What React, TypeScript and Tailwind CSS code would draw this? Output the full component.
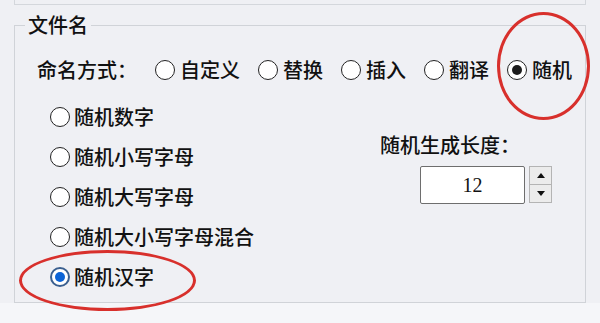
import React from "react";

const FONT = "font-['Noto_Sans_CJK_SC','Noto_Sans',sans-serif]";

const MODES = [
  { label: "自定义", checked: false },
  { label: "替换", checked: false },
  { label: "插入", checked: false },
  { label: "翻译", checked: false },
  { label: "随机", checked: true },
];

const KINDS = [
  { label: "随机数字", checked: false },
  { label: "随机小写字母", checked: false },
  { label: "随机大写字母", checked: false },
  { label: "随机大小写字母混合", checked: false },
  { label: "随机汉字", checked: true },
];

function Radio({ checked, blue }: { checked: boolean; blue?: boolean }) {
  if (checked && blue) {
    return (
      <span className="flex h-[20px] w-[20px] shrink-0 items-center justify-center rounded-full border-2 border-[#3a5f8f] bg-white">
        <span className="h-[10px] w-[10px] rounded-full bg-[#0b63d6]" />
      </span>
    );
  }
  return (
    <span className="flex h-[20px] w-[20px] shrink-0 items-center justify-center rounded-full border-[1.5px] border-[#222] bg-white">
      {checked && <span className="h-[10px] w-[10px] rounded-full bg-[#1c1c1c]" />}
    </span>
  );
}

export default function App() {
  return (
    <div className={`relative h-[323px] w-[600px] overflow-hidden bg-[#eff0f4] font-medium text-[#111] ${FONT}`}>
      <div className="mx-[14px] h-[5px] border-x border-b border-[#d4d7dc]" />

      <div className="relative mx-[14px] mt-[20px] h-[278px] border border-[#d0d3d8]">
        <span className="absolute left-[10px] top-[-14px] bg-[#eff0f4] px-[3px] text-[20px] leading-[26px]">
          文件名
        </span>

        <div className="flex items-center gap-[18px] pl-[22px] pt-[32px] text-[20px] leading-[24px]">
          <span>命名方式：</span>
          {MODES.map((m) => (
            <span key={m.label} className="flex items-center gap-[5px]">
              <Radio checked={m.checked} />
              <span>{m.label}</span>
            </span>
          ))}
        </div>

        <div className="mt-[15px] flex">
          <div className="flex w-[365px] flex-col pl-[35px]">
            {KINDS.map((k) => (
              <div key={k.label} className="flex h-[40px] items-center gap-[4px] text-[20px]">
                <Radio checked={k.checked} blue />
                <span>{k.label}</span>
              </div>
            ))}
          </div>

          <div className="flex flex-col pt-[36px]">
            <span className="text-[20px] leading-[24px]">随机生成长度：</span>
            <div className="ml-[40px] mt-[9px] flex gap-[4px]">
              <div className="flex h-[38px] w-[105px] items-center justify-center rounded-[2px] border border-[#6e6e6e] bg-white font-['Liberation_Serif',serif] text-[20px] font-normal">
                12
              </div>
              <div className="flex h-[37px] w-[23px] flex-col border border-[#b4b4b4] bg-[#ececec]">
                <div className="flex flex-1 items-center justify-center border-b border-[#b4b4b4]">
                  <span className="h-0 w-0 border-x-[4px] border-b-[5px] border-x-transparent border-b-[#111]" />
                </div>
                <div className="flex flex-1 items-center justify-center">
                  <span className="h-0 w-0 border-x-[4px] border-t-[5px] border-x-transparent border-t-[#111]" />
                </div>
              </div>
            </div>
          </div>
        </div>
      </div>

      <div className="h-[20px] bg-[#f5f6f9]" />

      {/* red annotation circles */}
      <span className="pointer-events-none absolute left-[497px] top-[12px] h-[108px] w-[93px] rounded-[50%] border-[3px] border-[#d8302c]" />
      <span className="pointer-events-none absolute left-[19px] top-[250px] h-[61px] w-[177px] rounded-[50%] border-[3px] border-[#d8302c]" />
    </div>
  );
}
